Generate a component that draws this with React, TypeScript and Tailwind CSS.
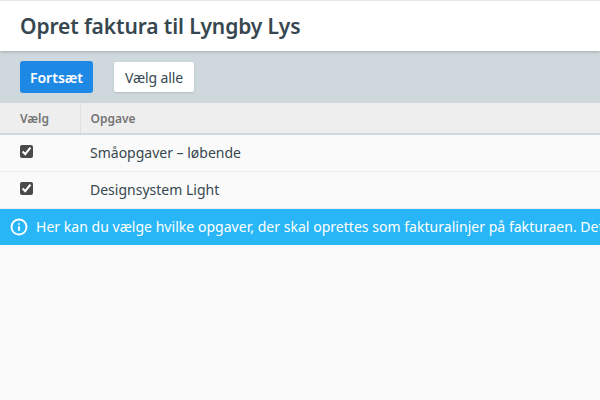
import { Info } from "lucide-react";

const tasks = ["Småopgaver – løbende", "Designsystem Light"];

export default function App() {
  return (
    <div className="h-[400px] overflow-hidden bg-[#fafafa] font-['Noto_Sans',sans-serif] text-[#37474f]">
      <div className="h-[1px] bg-[#eeeeee]" />
      <header className="relative z-10 h-[50px] bg-white px-5 flex items-center shadow-[0_1px_3px_rgba(0,0,0,0.2)]">
        <h1 className="text-[21px] font-semibold leading-none tracking-[-0.12px] text-[#37474f]">Opret faktura til Lyngby Lys</h1>
      </header>
      <div className="h-[52px] bg-[#cfd8dc] px-5 flex items-center gap-[21px]">
        <button className="h-8 w-[73px] rounded-[3px] bg-[#1e88e5] text-white text-[14px] font-semibold">Fortsæt</button>
        <button className="h-[30px] w-[80px] rounded-[2px] bg-white text-[#37474f] text-[14px] tracking-[-0.1px] shadow-sm">Vælg alle</button>
      </div>
      <table className="w-full border-collapse text-[14px]">
        <thead>
          <tr className="h-[31px] bg-[#eeeeee] border-b-2 border-[#cfd8dc] text-[12px] text-[#757575]">
            <th className="w-[80px] pl-5 pt-[1px] text-left font-semibold border-r border-[#e0e0e0]">Vælg</th>
            <th className="pl-[10px] pt-[1px] text-left font-semibold">Opgave</th>
          </tr>
        </thead>
        <tbody>
          {tasks.map((task) => (
            <tr key={task} className="h-[37px] border-b border-[#eeeeee]">
              <td className="pl-5">
                <input type="checkbox" defaultChecked className="block w-[13px] h-[13px] -mt-[3px] accent-[#4a4a4a]" />
              </td>
              <td className="pl-[10px]">{task}</td>
            </tr>
          ))}
        </tbody>
      </table>
      <div className="h-[36px] bg-[#29b6f6] text-white text-[14px] tracking-[0.03px] flex items-center pl-[10px] whitespace-nowrap overflow-hidden">
        <Info size={18} strokeWidth={2.5} className="shrink-0 mr-[8px]" />
        <span>Her kan du vælge hvilke opgaver, der skal oprettes som fakturalinjer på fakturaen. Det</span>
      </div>
    </div>
  );
}
